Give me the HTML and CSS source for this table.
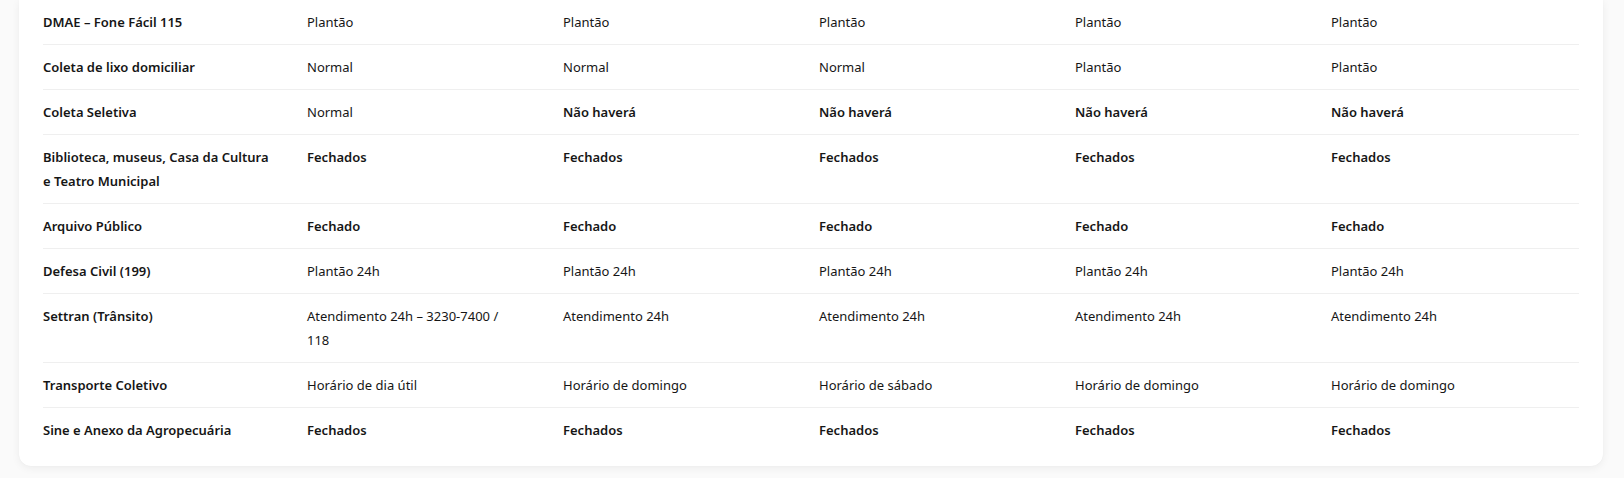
FILE: index.html
```html
<!DOCTYPE html>
<html lang="pt-BR">
<head>
<meta charset="utf-8">
<title>Funcionamento dos serviços</title>
<link rel="stylesheet" href="styles.css">
</head>
<body>
<div class="page">
  <div class="card">
    <table class="schedule">
      <colgroup>
        <col class="c-first">
        <col class="c-mid">
        <col class="c-mid">
        <col class="c-mid">
        <col class="c-mid">
        <col class="c-last">
      </colgroup>
      <tbody>
        <tr>
          <th>DMAE – Fone Fácil 115</th>
          <td>Plantão</td><td>Plantão</td><td>Plantão</td><td>Plantão</td><td>Plantão</td>
        </tr>
        <tr>
          <th>Coleta de lixo domiciliar</th>
          <td>Normal</td><td>Normal</td><td>Normal</td><td>Plantão</td><td>Plantão</td>
        </tr>
        <tr>
          <th>Coleta Seletiva</th>
          <td>Normal</td><td class="strong">Não haverá</td><td class="strong">Não haverá</td><td class="strong">Não haverá</td><td class="strong">Não haverá</td>
        </tr>
        <tr>
          <th>Biblioteca, museus, Casa da Cultura e Teatro Municipal</th>
          <td class="strong">Fechados</td><td class="strong">Fechados</td><td class="strong">Fechados</td><td class="strong">Fechados</td><td class="strong">Fechados</td>
        </tr>
        <tr>
          <th>Arquivo Público</th>
          <td class="strong">Fechado</td><td class="strong">Fechado</td><td class="strong">Fechado</td><td class="strong">Fechado</td><td class="strong">Fechado</td>
        </tr>
        <tr>
          <th>Defesa Civil (199)</th>
          <td>Plantão 24h</td><td>Plantão 24h</td><td>Plantão 24h</td><td>Plantão 24h</td><td>Plantão 24h</td>
        </tr>
        <tr>
          <th>Settran (Trânsito)</th>
          <td>Atendimento 24h – 3230-7400 / 118</td><td>Atendimento 24h</td><td>Atendimento 24h</td><td>Atendimento 24h</td><td>Atendimento 24h</td>
        </tr>
        <tr>
          <th>Transporte Coletivo</th>
          <td>Horário de dia útil</td><td>Horário de domingo</td><td>Horário de sábado</td><td>Horário de domingo</td><td>Horário de domingo</td>
        </tr>
        <tr>
          <th>Sine e Anexo da Agropecuária</th>
          <td class="strong">Fechados</td><td class="strong">Fechados</td><td class="strong">Fechados</td><td class="strong">Fechados</td><td class="strong">Fechados</td>
        </tr>
      </tbody>
    </table>
  </div>
</div>
</body>
</html>
```
FILE: styles.css
```css
html, body {
  margin: 0;
  padding: 0;
  background: #fafafa;
}

body {
  font-family: "Noto Sans", "Open Sans", "Liberation Sans", sans-serif;
  font-size: 13px;
  color: #161616;
}

.page {
  padding: 0 20px 12px 19px;
}

.card {
  width: 1584px;
  box-sizing: border-box;
  background: #ffffff;
  border-radius: 0 0 12px 12px;
  padding: 0 24px 14px 24px;
  box-shadow: 0 2px 8px rgba(0, 0, 0, 0.06), 0 0 1px rgba(0, 0, 0, 0.06);
}

.schedule {
  width: 1536px;
  table-layout: fixed;
  border-collapse: collapse;
}

.c-first { width: 264px; }
.c-mid { width: 256px; }
.c-last { width: 248px; }

.schedule th,
.schedule td {
  padding: 10px 44px 10px 0;
  line-height: 24px;
  text-align: left;
  vertical-align: top;
  border-bottom: 1px solid #efefef;
}

.schedule th {
  font-weight: 600;
  padding-right: 32px;
}

.schedule tr:last-child th,
.schedule tr:last-child td {
  border-bottom: none;
}

.schedule td {
  font-weight: 400;
}

.schedule td.strong {
  font-weight: 600;
}
```
